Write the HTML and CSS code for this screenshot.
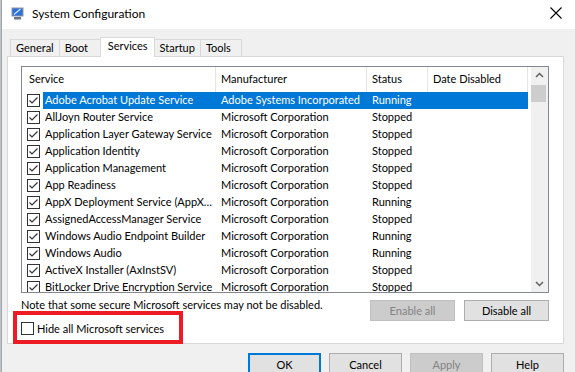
FILE: index.html
```html
<!DOCTYPE html>
<html>
<head>
<meta charset="utf-8">
<title>System Configuration</title>
<link rel="stylesheet" href="styles.css">
</head>
<body>
<div class="desk"></div>
<div class="window">
  <div class="titlebar">
    <svg class="appicon" width="13" height="13" viewBox="0 0 13 13">
      <rect x="0.5" y="0.5" width="12" height="9" fill="#8b97a8"/>
      <rect x="1.5" y="1.5" width="10" height="7" fill="#2f6fd8"/>
      <path d="M3 7.5 L9.5 2" stroke="#d3e6ff" stroke-width="1.2"/>
      <rect x="3" y="10" width="7" height="2.5" fill="#6b7585"/>
    </svg>
    <span class="title">System Configuration</span>
    <svg class="close" width="12" height="12" viewBox="0 0 12 12">
      <path d="M0.5 0.5 L11.5 11.5 M11.5 0.5 L0.5 11.5" stroke="#000" stroke-width="1.1" fill="none"/>
    </svg>
  </div>
  <div class="client">
    <div class="tabs">
      <div class="tab">General</div>
      <div class="tab">Boot</div>
      <div class="tab active">Services</div>
      <div class="tab">Startup</div>
      <div class="tab">Tools</div>
    </div>
    <div class="panel">
      <div class="list">
        <div class="list-main">
          <div class="lhead">
            <div class="hc hc-first">Service</div>
            <div class="hc">Manufacturer</div>
            <div class="hc">Status</div>
            <div class="hc">Date Disabled</div>
          </div>
          <div class="row sel"><span class="cb"><svg viewBox="0 0 11 11"><path d="M1.5 5.5 L4 8 L9.5 2.5"/></svg></span><span class="c c1">Adobe Acrobat Update Service</span><span class="c">Adobe Systems Incorporated</span><span class="c">Running</span><span class="c"></span></div>
          <div class="row"><span class="cb"><svg viewBox="0 0 11 11"><path d="M1.5 5.5 L4 8 L9.5 2.5"/></svg></span><span class="c c1">AllJoyn Router Service</span><span class="c">Microsoft Corporation</span><span class="c">Stopped</span><span class="c"></span></div>
          <div class="row"><span class="cb"><svg viewBox="0 0 11 11"><path d="M1.5 5.5 L4 8 L9.5 2.5"/></svg></span><span class="c c1">Application Layer Gateway Service</span><span class="c">Microsoft Corporation</span><span class="c">Stopped</span><span class="c"></span></div>
          <div class="row"><span class="cb"><svg viewBox="0 0 11 11"><path d="M1.5 5.5 L4 8 L9.5 2.5"/></svg></span><span class="c c1">Application Identity</span><span class="c">Microsoft Corporation</span><span class="c">Stopped</span><span class="c"></span></div>
          <div class="row"><span class="cb"><svg viewBox="0 0 11 11"><path d="M1.5 5.5 L4 8 L9.5 2.5"/></svg></span><span class="c c1">Application Management</span><span class="c">Microsoft Corporation</span><span class="c">Stopped</span><span class="c"></span></div>
          <div class="row"><span class="cb"><svg viewBox="0 0 11 11"><path d="M1.5 5.5 L4 8 L9.5 2.5"/></svg></span><span class="c c1">App Readiness</span><span class="c">Microsoft Corporation</span><span class="c">Stopped</span><span class="c"></span></div>
          <div class="row"><span class="cb"><svg viewBox="0 0 11 11"><path d="M1.5 5.5 L4 8 L9.5 2.5"/></svg></span><span class="c c1">AppX Deployment Service (AppXSVC)</span><span class="c">Microsoft Corporation</span><span class="c">Running</span><span class="c"></span></div>
          <div class="row"><span class="cb"><svg viewBox="0 0 11 11"><path d="M1.5 5.5 L4 8 L9.5 2.5"/></svg></span><span class="c c1">AssignedAccessManager Service</span><span class="c">Microsoft Corporation</span><span class="c">Stopped</span><span class="c"></span></div>
          <div class="row"><span class="cb"><svg viewBox="0 0 11 11"><path d="M1.5 5.5 L4 8 L9.5 2.5"/></svg></span><span class="c c1">Windows Audio Endpoint Builder</span><span class="c">Microsoft Corporation</span><span class="c">Running</span><span class="c"></span></div>
          <div class="row"><span class="cb"><svg viewBox="0 0 11 11"><path d="M1.5 5.5 L4 8 L9.5 2.5"/></svg></span><span class="c c1">Windows Audio</span><span class="c">Microsoft Corporation</span><span class="c">Running</span><span class="c"></span></div>
          <div class="row"><span class="cb"><svg viewBox="0 0 11 11"><path d="M1.5 5.5 L4 8 L9.5 2.5"/></svg></span><span class="c c1">ActiveX Installer (AxInstSV)</span><span class="c">Microsoft Corporation</span><span class="c">Stopped</span><span class="c"></span></div>
          <div class="row"><span class="cb"><svg viewBox="0 0 11 11"><path d="M1.5 5.5 L4 8 L9.5 2.5"/></svg></span><span class="c c1">BitLocker Drive Encryption Service</span><span class="c">Microsoft Corporation</span><span class="c">Stopped</span><span class="c"></span></div>
        </div>
        <div class="vscroll">
          <div class="sarrow"><svg width="17" height="17" viewBox="0 0 17 17"><polyline points="5,10 8.5,6.5 12,10"/></svg></div>
          <div class="thumb"></div>
          <div class="sarrow down"><svg width="17" height="17" viewBox="0 0 17 17"><polyline points="5,7 8.5,10.5 12,7"/></svg></div>
        </div>
      </div>
      <div class="actions">
        <div class="note">Note that some secure Microsoft services may not be disabled.</div>
        <button class="btn disabled">Enable all</button>
        <button class="btn">Disable all</button>
      </div>
      <label class="hide">
        <span class="cb empty"></span>
        <span>Hide all Microsoft services</span>
      </label>
    </div>
    <div class="footer">
      <button class="btn fbtn default">OK</button>
      <button class="btn fbtn">Cancel</button>
      <button class="btn fbtn disabled">Apply</button>
      <button class="btn fbtn">Help</button>
    </div>
  </div>
</div>
<div class="annot"></div>
</body>
</html>
```

FILE: styles.css
```css
* { box-sizing: border-box; }
html, body { margin: 0; padding: 0; }
body {
  width: 575px;
  height: 372px;
  overflow: hidden;
  position: relative;
  display: flex;
  background: #f0f0f0;
  font-family: Lato, "Noto Sans", sans-serif;
  font-size: 11px;
  color: #000;
}
.desk { width: 1px; background: #b9c3d1; flex: none; }
.window {
  flex: 1;
  display: flex;
  flex-direction: column;
  border-left: 1px solid #a6a6a6;
  background: #f0f0f0;
}
.titlebar {
  height: 29px;
  flex: none;
  background: #fff;
  display: flex;
  align-items: center;
  padding-left: 9px;
}
.appicon { flex: none; margin-top: -3px; }
.title { margin-left: 8px; font-size: 12px; line-height: 16px; margin-top: -2px; }
.close { margin-left: auto; margin-right: 13px; margin-top: -3px; }

.client { padding: 0 11px 0 5px; }
.tabs {
  height: 27px;
  display: flex;
  align-items: flex-end;
  padding-left: 3px;
}
.tab {
  height: 17px;
  min-width: 42px;
  line-height: 16px;
  padding: 0 5px 0 5px;
  border: 1px solid #d9d9d9;
  border-bottom: none;
  margin-right: -1px;
  background: #f0f0f0;
}
.tab.active {
  height: 20px;
  background: #fff;
  margin-bottom: -1px;
  position: relative;
  z-index: 1;
  padding: 0 6px 0 7px;
}
.panel {
  height: 288px;
  background: #fff;
  border: 1px solid #d9d9d9;
  padding: 9px 14px 0 13px;
}
.list {
  height: 227px;
  border: 1px solid #828790;
  display: flex;
  overflow: hidden;
}
.list-main { flex: 1; overflow: hidden; }
.lhead {
  height: 25px;
  display: grid;
  grid-template-columns: 194px 151px 61px 100px;
}
.hc {
  line-height: 24px;
  padding-left: 5px;
  border-right: 1px solid #e5e5e5;
  white-space: nowrap;
}
.hc-first { padding-left: 7px; }
.row {
  height: 17px;
  display: grid;
  grid-template-columns: 21px 173px 151px 61px 100px;
  align-items: center;
}
.c {
  height: 17px;
  line-height: 16px;
  padding-left: 5px;
  white-space: nowrap;
  overflow: hidden;
  text-overflow: ellipsis;
}
.c1 { padding-left: 2px; padding-right: 0; }
.row.sel .c { background: #0078d7; color: #fff; }
.cb {
  width: 13px;
  height: 13px;
  border: 1px solid #333;
  background: #fff;
  margin-left: 5px;
  display: block;
}
.cb svg { display: block; width: 11px; height: 11px; }
.cb path { fill: none; stroke: #333; stroke-width: 1.2; }
.vscroll {
  width: 17px;
  background: #f0f0f0;
  display: flex;
  flex-direction: column;
  flex: none;
}
.sarrow { height: 17px; }
.sarrow svg { display: block; }
.sarrow polyline { fill: none; stroke: #606060; stroke-width: 1.5; }
.thumb { height: 17px; margin: 1px 2px 0 0; background: #cdcdcd; }
.sarrow.down { margin-top: auto; }

.actions {
  display: flex;
  align-items: flex-start;
  margin-top: 7px;
  gap: 9px;
}
.note { flex: 1; line-height: 16px; margin-top: -3px; white-space: nowrap; }
.btn {
  font: inherit;
  color: #000;
  width: 85px;
  height: 21px;
  padding: 0;
  background: #e1e1e1;
  border: 1px solid #adadad;
  line-height: 18px;
}
.btn.disabled { background: #cccccc; border-color: #bfbfbf; color: #838383; }
.hide {
  display: flex;
  align-items: center;
  margin-top: 1px;
  height: 13px;
}
.hide .cb { margin-left: 0; margin-right: 3px; }
.hide span:last-child { line-height: 16px; }

.footer {
  display: flex;
  justify-content: flex-end;
  gap: 8px;
  margin-top: 9px;
}
.fbtn { width: 73px; height: 23px; }
.fbtn.default { border: 2px solid #0078d7; }

.annot {
  position: absolute;
  left: 13px;
  top: 311px;
  width: 170px;
  height: 33px;
  border: 4px solid #ed1c24;
}
```
